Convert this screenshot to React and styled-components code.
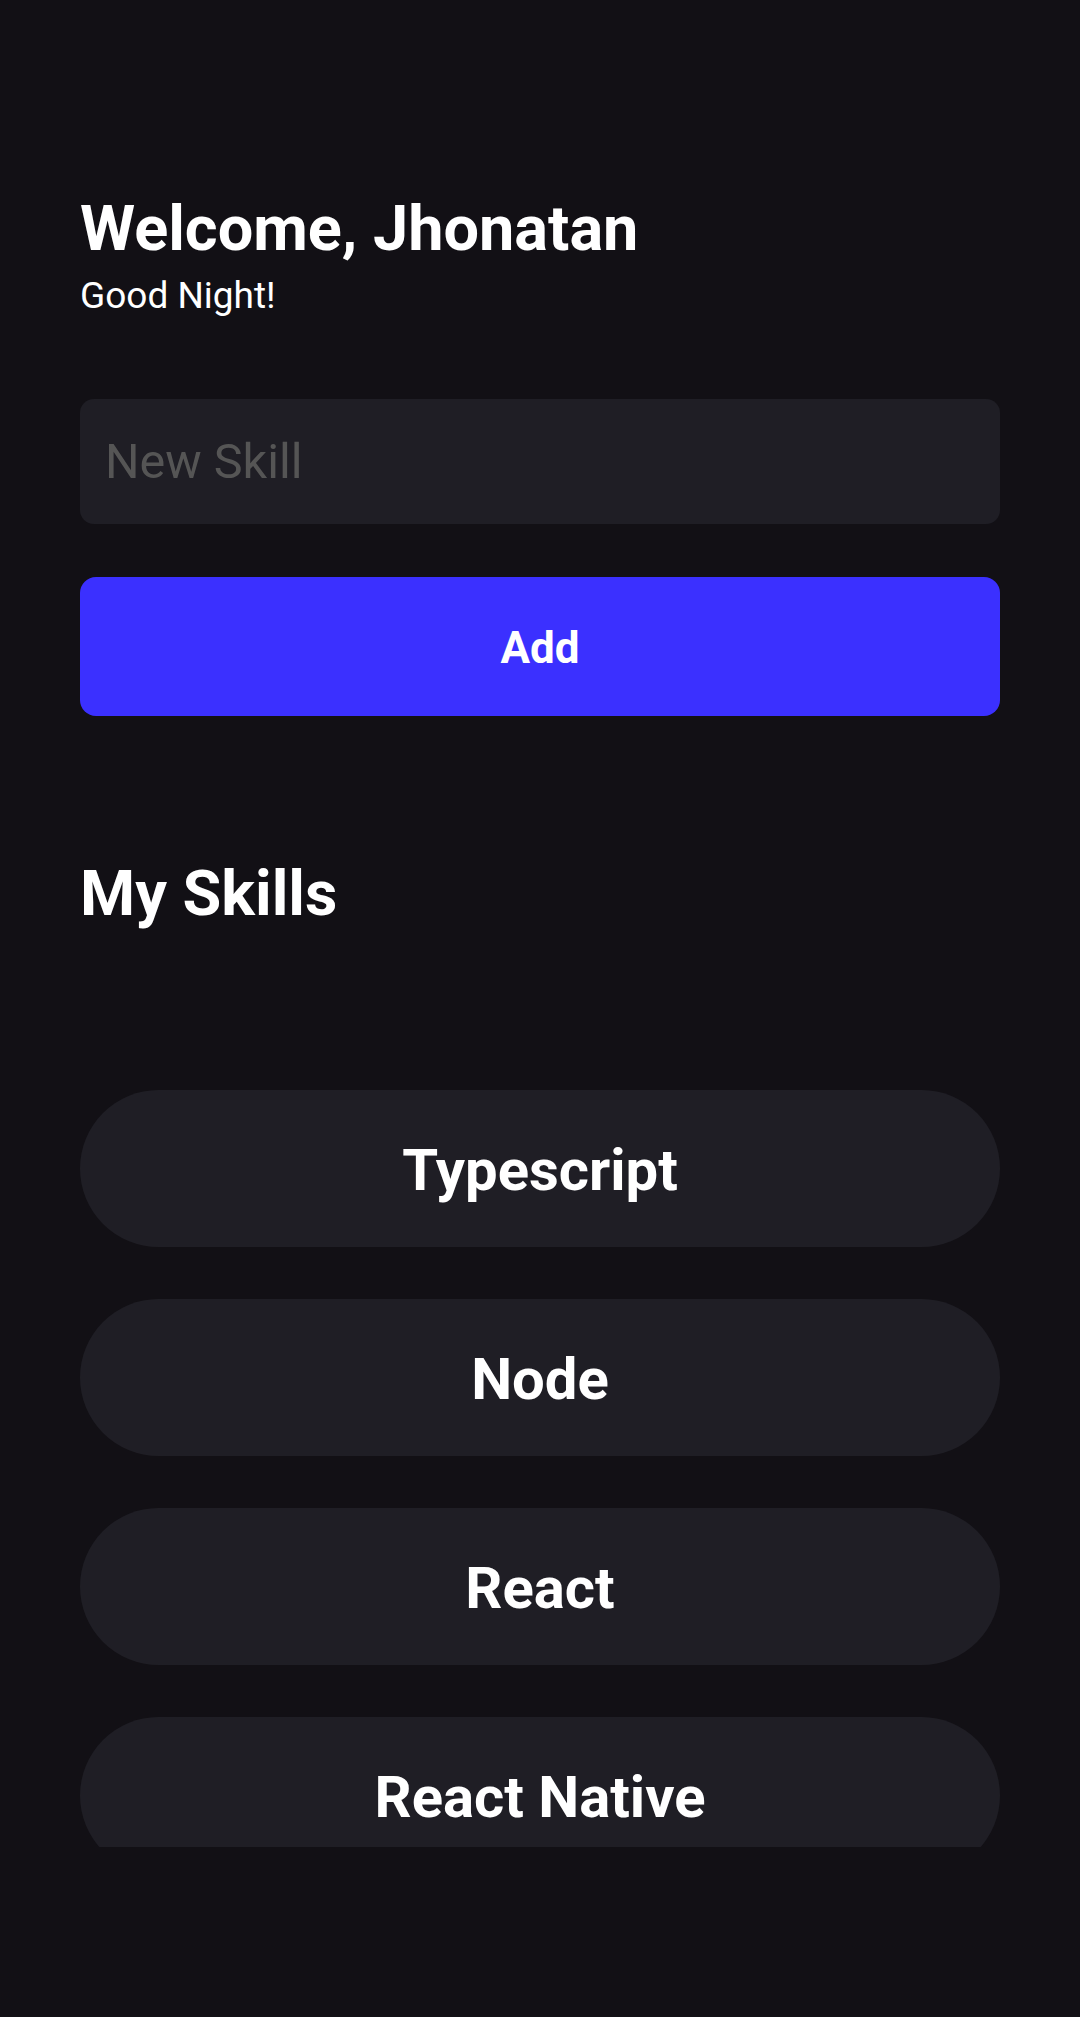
import React from "react";
import styled, { createGlobalStyle } from "styled-components";

const GlobalStyle = createGlobalStyle`
  html, body {
    margin: 0;
    padding: 0;
    background: #121015;
  }
  * { box-sizing: border-box; }
`;

const Screen = styled.div`
  min-height: 2017px;
  background: #121015;
  padding: 192px 80px 0;
  font-family: Roboto, "Liberation Sans", sans-serif;
  color: #ffffff;
  display: flex;
  flex-direction: column;
`;

const Title = styled.h1`
  margin: 0;
  font-size: 63px;
  line-height: 74px;
  font-weight: 700;
  color: #fff;
`;

const Greeting = styled.p`
  margin: 8px 0 0;
  font-size: 37px;
  line-height: 43px;
  font-weight: 400;
  color: #fff;
`;

const Input = styled.input`
  margin-top: 82px;
  width: 100%;
  height: 125px;
  border: none;
  outline: none;
  border-radius: 14px;
  background: #1f1e25;
  padding: 0 24px 0 25px;
  font-family: Roboto, "Liberation Sans", sans-serif;
  font-size: 48.5px;
  color: #fff;
  &::placeholder {
    color: #555555;
  }
`;

const AddButton = styled.button`
  margin-top: 53px;
  width: 100%;
  height: 139px;
  border: none;
  border-radius: 16px;
  background: #3b30ff;
  color: #fff;
  font-family: Roboto, "Liberation Sans", sans-serif;
  font-size: 44px;
  font-weight: 700;
  display: flex;
  align-items: center;
  justify-content: center;
  padding: 2px 0 0;
`;

const SectionTitle = styled.h2`
  margin: 141px 0 0;
  font-size: 63px;
  line-height: 74px;
  font-weight: 700;
  color: #fff;
`;

const SkillList = styled.div`
  margin-top: 159px;
  height: 757px;
  overflow: hidden;
  display: flex;
  flex-direction: column;
  gap: 52px;
`;

const SkillCard = styled.button`
  flex-shrink: 0;
  width: 100%;
  height: 157px;
  border: none;
  border-radius: 79px;
  background: #1f1e25;
  color: #fff;
  font-family: Roboto, "Liberation Sans", sans-serif;
  font-size: 58px;
  font-weight: 700;
  display: flex;
  align-items: center;
  justify-content: center;
  padding: 2px 0 0;
`;

const skills = ["Typescript", "Node", "React", "React Native"];

export default function App() {
  return (
    <>
      <GlobalStyle />
      <Screen>
        <Title>Welcome, Jhonatan</Title>
        <Greeting>Good Night!</Greeting>
        <Input placeholder="New Skill" />
        <AddButton>Add</AddButton>
        <SectionTitle>My Skills</SectionTitle>
        <SkillList>
          {skills.map((s) => (
            <SkillCard key={s}>{s}</SkillCard>
          ))}
        </SkillList>
      </Screen>
    </>
  );
}
